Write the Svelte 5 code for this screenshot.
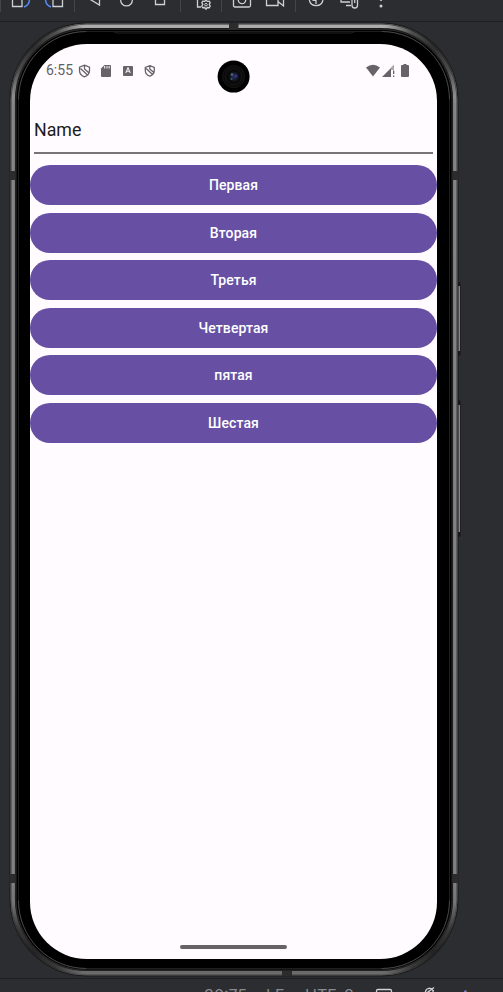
<script>
  const buttons = ['Первая', 'Вторая', 'Третья', 'Четвертая', 'пятая', 'Шестая'];
  const corners = [[33, 46], [435, 46], [33, 953], [435, 953]];
</script>

<main class="emulator">
  <header class="toolbar">
    <svg width="503" height="21" viewBox="0 0 503 21" fill="none" stroke="#ced0d6" stroke-width="1.3">
      <path d="M.5 0V12M74.500 0V12M180.500 0V12M221.500 0V12M295.500 0V12" stroke="#43454a" stroke-width="1" />
      <path d="M12.500 -4V6.500H22V-4M53 -4V6.500H62.500V-4" />
      <path d="M24 7Q29.500 5 29.500 -1M51 7Q45.500 5 45.500 -1" stroke="#548af7" stroke-width="1.500" />
      <path d="M99.500 -5V5L89.500 -1M155.500 -4V4.500H164.500V-4" />
      <circle cx="126.500" cy="0" r="5.900" />
      <path d="M197.500 -2V7H201" />
      <path d="M206 .2l1.300 1.100 2-.2.900 1.600-1 1.600 1 1.800-.9 1.600-2-.2-1.300 1.600-1.300-1.600-2 .2-.9-1.600 1-1.800-1-1.600.9-1.600 2 .2z" />
      <circle cx="206" cy="4.700" r="1.300" stroke-width="1" />
      <path d="M233.500 -4V5.500Q233.500 7 235 7H249Q250.500 7 250.500 5.500V-4" />
      <circle cx="242" cy="0" r="3.700" />
      <path d="M266.500 -3V5.500H278V-3M278 1.500L283.500 6V-3" />
      <path d="M309.300 0A7 7 0 0 0 323 0M316 -2V4M312.500 0.300H316" />
      <path d="M341 -2V2H350M346 5.500H351M352 -1H349V-2" />
      <rect x="352" y="-3" width="5.500" height="11" rx="2.700" />
      <path d="M354.700 0V3" />
      <g fill="#ced0d6" stroke="none"><circle cx="381" cy="-.3" r="1.200" /><circle cx="381" cy="6" r="1.500" /></g>
    </svg>
  </header>

  <section class="stage">
    <div class="device">
      <svg class="frame" width="503" height="956" viewBox="0 22 503 956" fill="none">
        <defs>
          <linearGradient id="metal" x1="0" y1="22" x2="0" y2="977" gradientUnits="userSpaceOnUse">
            <stop offset="0" stop-color="#b0afae" />
            <stop offset=".09" stop-color="#858585" />
            <stop offset=".9" stop-color="#808080" />
            <stop offset=".96" stop-color="#606060" />
            <stop offset="1" stop-color="#6c6c6c" />
          </linearGradient>
          {#each corners as [x, y], i}
            <radialGradient id="shade{i}" cx={x} cy={y} r="54" gradientUnits="userSpaceOnUse">
              <stop offset="0" stop-color="#171717" stop-opacity=".85" />
              <stop offset=".5" stop-color="#202020" stop-opacity=".65" />
              <stop offset="1" stop-color="#202020" stop-opacity="0" />
            </radialGradient>
          {/each}
          <radialGradient id="lens">
            <stop offset="0" stop-color="#302d70" />
            <stop offset=".5" stop-color="#182434" />
            <stop offset="1" stop-color="#08090c" />
          </radialGradient>
        </defs>
        <g>
          <rect x="456" y="282" width="4.500" height="74" rx="2" fill="#171719" />
          <rect x="458" y="286" width="2" height="65" fill="#858584" />
          <rect x="456" y="400" width="4.500" height="137" rx="2" fill="#171719" />
          <rect x="458" y="405" width="2" height="127" fill="#858584" />
        </g>
        <rect x="9.500" y="22.500" width="449" height="954" rx="77" fill="#1b1b1d" />
        <rect x="12.800" y="25.800" width="442.400" height="947.400" rx="74" stroke="url(#metal)" stroke-width="4.200" />
        <rect x="11.200" y="24.200" width="445.600" height="950.600" rx="75.500" stroke="#505050" stroke-width="1" />
        {#each corners as c, i}
          <rect x="12.800" y="25.800" width="442.400" height="947.400" rx="74" stroke="url(#shade{i})" stroke-width="5" />
        {/each}
        <rect x="16" y="29.500" width="436" height="940.500" rx="70" fill="#000" stroke="#292929" />
        <rect x="18.500" y="31.500" width="431" height="937" rx="68" stroke="#262626" stroke-width=".8" />
        <path d="M18.500 99.500A68 68 0 0 1 86.500 31.500M449.500 99.500A68 68 0 0 0 381.500 31.500M18.500 900.500A68 68 0 0 0 86.500 968.500M449.500 900.500A68 68 0 0 1 381.500 968.500" stroke="#606060" stroke-width=".6" />
        <path d="M106 31.500H113L117 33H351L355 31.500H362" stroke="#202020" />
        <path d="M9.500 171H15.500V180H9.500zM452.500 171H458.500V180H452.500zM9.500 874H15.500V883H9.500zM452.500 874H458.500V883H452.500zM229 23H238.500V30H229zM282 971H292V976H282z" fill="#2c2c2c" />
      </svg>

      <div class="screen">
        <div class="status">
          <span class="clock">6:55</span>
          <svg width="364" height="24" viewBox="73 60 364 24" class="status-icons" fill="#666468">
            <g fill="none" stroke="#666468" stroke-width="1.300">
              <path d="M84.500 65.200L89.500 67.200V70.500Q89.500 75 84.500 76.800Q79.500 75 79.500 70.500V67.200ZM80.500 68.500L87.500 75M84.500 65.500V69L88.800 72.800" />
              <path d="M149.800 65.700L154.300 67.400V70.500Q154.300 74.500 149.800 76.100Q145.300 74.500 145.300 70.500V67.400ZM146.200 68.500L152.500 74.500M149.800 66V69L153.800 72.600" />
            </g>
            <path d="M104.500 65H110Q111 65 111 66V76Q111 77 110 77H102Q101 77 101 76V68.500Z" />
            <path d="M104.700 66V68.500M107 66V68.500M109.200 66V68.500" stroke="#fffbfe" />
            <rect x="123" y="66" width="10" height="10" rx="1" />
            <path d="M125.800 73L128 67.500L130.200 73M126.500 71.200H129.500" stroke="#fffbfe" fill="none" />
            <path d="M366 67.500Q373 62 380 67.500L373 76.500Z" />
            <path d="M382 77L391 68V77Z" />
            <path d="M391 67.500L394 64.500V70H391Z" opacity=".55" />
            <path d="M393 70.500H394.300V74H393zM393 75.500H394.300V77H393z" />
            <path d="M403.500 65V64H406.500V65H408Q409 65 409 66V76Q409 77 408 77H402Q401 77 401 76V66Q401 65 402 65Z" />
          </svg>
          <svg class="camera" width="34" height="34" viewBox="0 0 34 34">
            <circle cx="16.600" cy="16.600" r="16" fill="#000" />
            <circle cx="16.600" cy="16.600" r="11" fill="#0b0b0b" stroke="#151515" />
            <circle cx="16.600" cy="16.600" r="8" fill="#090909" stroke="#181818" />
            <circle cx="17" cy="16.500" r="5.500" fill="url(#lens)" />
            <circle cx="15" cy="14.500" r="1.200" fill="#596a78" />
            <circle cx="14.500" cy="19" r="1" fill="#425a6b" />
            <circle cx="19" cy="16" r="1.300" fill="#413194" />
          </svg>
        </div>
        <div class="field">Name</div>
        <div class="buttons">
          {#each buttons as label}
            <button>{label}</button>
          {/each}
        </div>
        <div class="home"></div>
      </div>
    </div>
  </section>

  <footer class="statusbar">
    <span class="pos">30:75</span>
    <span class="eol">LF</span>
    <span class="enc">UTF-8</span>
    <svg width="100" height="14" viewBox="370 979 100 14" fill="none" stroke="#ced0d6" stroke-width="1.300">
      <path d="M376.500 994V991Q376.500 989.500 378 989.500H390Q391.500 989.500 391.500 991V994" />
      <path d="M425.500 995V991.500A4 4 0 0 1 433 990.500M424 995L434 987.500M429 995V990.500M432 995L433.500 990" />
      <path d="M463 994L465.500 990.500" stroke="#548af7" />
      <path d="M466 990.500V994" stroke="#c77d55" />
    </svg>
  </footer>
</main>

<style>
  :global(body) { margin: 0; background: #2b2d30; }
  .emulator {
    width: 503px;
    height: 992px;
    overflow: hidden;
    display: flex;
    flex-direction: column;
    background: #2b2d30;
    font-family: Roboto, "Noto Sans", sans-serif;
  }
  .toolbar { height: 21px; flex: none; border-bottom: 1px solid #1e1f22; }
  .toolbar svg, .statusbar svg { display: block; flex: none; }
  .stage { height: 956px; flex: none; }
  .device { position: relative; height: 956px; padding: 22px 66px 0 30px; box-sizing: border-box; }
  .frame { position: absolute; left: 0; top: 0; }
  .screen {
    position: relative;
    width: 407px;
    height: 915px;
    border-radius: 57px;
    background: #fffbfe;
    display: flex;
    flex-direction: column;
    overflow: hidden;
  }
  .status { position: relative; height: 64px; display: flex; align-items: flex-start; padding: 16px 0 0 16px; box-sizing: border-box; }
  .clock { width: 27px; flex: none; font-size: 14px; line-height: 21px; color: #625f63; }
  .status-icons { width: 364px; flex: none; }
  .camera { position: absolute; left: 187px; top: 16px; }
  .field {
    height: 46px;
    box-sizing: border-box;
    margin: 0 4px;
    padding-top: 10px;
    border-bottom: 2px solid #7a777b;
    border-bottom-color: #777478;
    font-size: 17.800px;
    line-height: 24px;
    color: #1d1b20;
  }
  .buttons { display: flex; flex-direction: column; gap: 7.500px; margin-top: 11px; }
  button {
    height: 40px;
    border: 0;
    border-radius: 20px;
    padding: 0;
    background: #6750a4;
    color: #fff;
    font: 500 14px/20px Roboto, "Noto Sans", sans-serif;
    letter-spacing: .1px;
  }
  .home { width: 107px; height: 4px; border-radius: 2px; background: #666367; margin: auto auto 10px; }
  .statusbar {
    height: 14px;
    flex: none;
    box-sizing: border-box;
    border-top: 1px solid #1e1f22;
    display: flex;
    overflow: hidden;
    padding-left: 204px;
    font: 16px/20px Inter, sans-serif;
    color: #868a91;
  }
  .statusbar span { padding-top: 6px; flex: none; }
  .pos { width: 62px; }
  .eol { width: 39px; }
  .enc { width: 65px; }
</style>
